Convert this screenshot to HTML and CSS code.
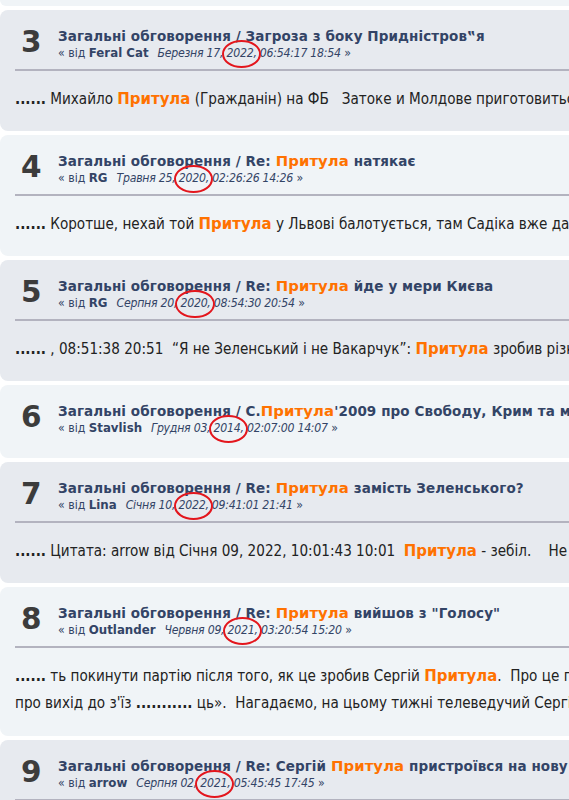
FILE: index.html
```html
<!DOCTYPE html>
<html lang="uk">
<head>
    <meta charset="UTF-8">
    <meta name="viewport" content="width=device-width, initial-scale=1.0">
    <title>Пошук: Притула</title>
    <link rel="stylesheet" href="styles.css">
</head>
<body>
    <div class="results">
        <div class="result windowbg2 tail"></div>

        <div class="result windowbg">
            <div class="topic-details">
                <div class="counter">3</div>
                <div class="topic-text">
                    <h5><a href="#">Загальні обговорення</a> / <a href="#">Загроза з боку Придністров‟я</a></h5>
                    <span class="smalltext">« від <strong>Feral Cat</strong>&nbsp; <em>Березня 17, <span class="year">2022,</span> 06:54:17 18:54</em> »</span>
                </div>
            </div>
            <div class="list-posts"><strong>......</strong> Михайло <span class="highlight">Притула</span> (Гражданін) на ФБ &nbsp; Затоке и Молдове приготовиться к худшему</div>
        </div>

        <div class="result windowbg2">
            <div class="topic-details">
                <div class="counter">4</div>
                <div class="topic-text">
                    <h5><a href="#">Загальні обговорення</a> / <a href="#">Re: <span class="highlight">Притула</span> натякає</a></h5>
                    <span class="smalltext">« від <strong>RG</strong>&nbsp; <em>Травня 25, <span class="year">2020,</span> 02:26:26 14:26</em> »</span>
                </div>
            </div>
            <div class="list-posts"><strong>......</strong> Коротше, нехай той <span class="highlight">Притула</span> у Львові балотується, там Садіка вже давно пора міняти</div>
        </div>

        <div class="result windowbg">
            <div class="topic-details">
                <div class="counter">5</div>
                <div class="topic-text">
                    <h5><a href="#">Загальні обговорення</a> / <a href="#">Re: <span class="highlight">Притула</span> йде у мери Києва</a></h5>
                    <span class="smalltext">« від <strong>RG</strong>&nbsp; <em>Серпня 20, <span class="year">2020,</span> 08:54:30 20:54</em> »</span>
                </div>
            </div>
            <div class="list-posts"><strong>......</strong> , 08:51:38 20:51 &nbsp;“Я не Зеленський і не Вакарчук”: <span class="highlight">Притула</span> зробив різку заяву</div>
        </div>

        <div class="result windowbg2 no-posts">
            <div class="topic-details">
                <div class="counter">6</div>
                <div class="topic-text">
                    <h5><a href="#">Загальні обговорення</a> / <a href="#">С.<span class="highlight">Притула</span>'2009 про Свободу, Крим та мову</a></h5>
                    <span class="smalltext">« від <strong>Stavlish</strong>&nbsp; <em>Грудня 03, <span class="year">2014,</span> 02:07:00 14:07</em> »</span>
                </div>
            </div>
        </div>

        <div class="result windowbg">
            <div class="topic-details">
                <div class="counter">7</div>
                <div class="topic-text">
                    <h5><a href="#">Загальні обговорення</a> / <a href="#">Re: <span class="highlight">Притула</span> замість Зеленського?</a></h5>
                    <span class="smalltext">« від <strong>Lina</strong>&nbsp; <em>Січня 10, <span class="year">2022,</span> 09:41:01 21:41</em> »</span>
                </div>
            </div>
            <div class="list-posts"><strong>......</strong> Цитата: arrow від Січня 09, 2022, 10:01:43 10:01 &nbsp;<span class="highlight">Притула</span> - зебіл. &nbsp; &nbsp;Не зебіл</div>
        </div>

        <div class="result windowbg2 two-lines">
            <div class="topic-details">
                <div class="counter">8</div>
                <div class="topic-text">
                    <h5><a href="#">Загальні обговорення</a> / <a href="#">Re: <span class="highlight">Притула</span> вийшов з "Голосу"</a></h5>
                    <span class="smalltext">« від <strong>Outlander</strong>&nbsp; <em>Червня 09, <span class="year">2021,</span> 03:20:54 15:20</em> »</span>
                </div>
            </div>
            <div class="list-posts"><strong>......</strong> ть покинути партію після того, як це зробив Сергій <span class="highlight">Притула</span>. &nbsp;Про це повідомили<br>про вихід до з'їз <strong>...........</strong> ць». &nbsp;Нагадаємо, на цьому тижні телеведучий Сергій Притула</div>
        </div>

        <div class="result windowbg">
            <div class="topic-details">
                <div class="counter">9</div>
                <div class="topic-text">
                    <h5><a href="#">Загальні обговорення</a> / <a href="#">Re: Сергій <span class="highlight">Притула</span> пристроївся на нову роботу</a></h5>
                    <span class="smalltext">« від <strong>arrow</strong>&nbsp; <em>Серпня 02, <span class="year">2021,</span> 05:45:45 17:45</em> »</span>
                </div>
            </div>
            <div class="list-posts"><strong>......</strong> Сергій <span class="highlight">Притула</span></div>
        </div>
    </div>
</body>
</html>
```

FILE: styles.css
```css
html, body {
    margin: 0;
    padding: 0;
    overflow: hidden;
}
body {
    background: #fff;
    color: #222;
    font-family: "DejaVu Sans", Verdana, sans-serif;
}
.results {
    width: 900px;
    display: flex;
    flex-direction: column;
    gap: 4px;
}
.result {
    border-radius: 8px;
}
.windowbg {
    background: #e7eaef;
}
.windowbg2 {
    background: #f0f4f7;
}
.tail {
    height: 6px;
    border-radius: 0 0 8px 8px;
}
.topic-details {
    display: flex;
    align-items: flex-start;
    padding: 18px 0 0 20px;
}
.counter {
    width: 37px;
    padding-left: 1px;
    font-size: 29.5px;
    font-weight: bold;
    line-height: 29px;
    color: #3c3c3c;
}
.topic-text h5 {
    margin: 0;
    font-size: 13.5px;
    letter-spacing: 0.1px;
    line-height: 17px;
    font-weight: bold;
    color: #346;
    white-space: nowrap;
}
.topic-text a {
    color: #346;
    text-decoration: none;
}
.smalltext {
    display: block;
    font-family: "DejaVu Sans Condensed", "DejaVu Sans", sans-serif;
    font-stretch: condensed;
    font-size: 12.2px;
    line-height: 16px;
    color: #346;
    white-space: nowrap;
}
.smalltext strong {
    font-family: "DejaVu Sans", sans-serif;
    font-stretch: normal;
    font-size: 11.8px;
}
.smalltext em {
    margin-left: 2px;
    letter-spacing: -0.25px;
}
.year {
    position: relative;
}
.year::after {
    content: "";
    position: absolute;
    top: -6px;
    bottom: -8px;
    left: -5px;
    right: -4px;
    border: 2px solid #e3161d;
    border-radius: 50%;
}
.list-posts {
    margin: 8px 0 0 15px;
    border-top: 2px solid #b3b3bf;
    padding: 14px 0 18px;
    font-family: "DejaVu Sans Condensed", "DejaVu Sans", sans-serif;
    font-stretch: condensed;
    font-size: 15.1px;
    line-height: 27px;
    white-space: nowrap;
}
.two-lines .list-posts {
    padding-bottom: 19px;
}
.no-posts {
    padding-bottom: 22px;
}
.highlight {
    color: #ff7200;
    font-weight: bold;
    font-size: 1.1em;
}
```
